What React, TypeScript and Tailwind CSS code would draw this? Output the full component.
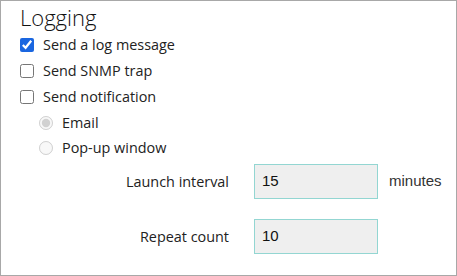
import React from "react";

export default function App() {
  const sans = { fontFamily: '"Open Sans", "Noto Sans", sans-serif' } as React.CSSProperties;
  return (
    <div
      className="w-[457px] h-[276px] border border-[#a8a8a8] bg-white text-[#222] box-border overflow-hidden"
      style={sans}
    >
      <div className="h-[30px] mt-[1px] pl-[19px] text-[22px] leading-[30px] font-light text-[#111]">
        Logging
      </div>
      <div className="flex flex-col pl-[19px]">
        {[
          ["Send a log message", true],
          ["Send SNMP trap", false],
          ["Send notification", false],
        ].map(([label, checked]) => (
          <label key={label as string} className="flex items-center h-[26px]">
            <input
              type="checkbox"
              defaultChecked={checked as boolean}
              className="m-0 w-[14px] h-[14px] accent-[#1a66e0]"
            />
            <span className="ml-[9px] text-[14.4px] text-[#222]">{label as string}</span>
          </label>
        ))}
      </div>
      <div className="flex flex-col pl-[38px]">
        <label className="flex items-center h-[25px]">
          <input type="radio" name="n" defaultChecked disabled className="m-0 w-[14px] h-[14px]" />
          <span className="ml-[9px] text-[14.4px] text-[#222]">Email</span>
        </label>
        <label className="flex items-center h-[25px]">
          <input type="radio" name="n" disabled className="m-0 w-[14px] h-[14px]" />
          <span className="ml-[9px] text-[14.4px] text-[#222]">Pop-up window</span>
        </label>
      </div>
      <div className="flex items-center h-[35px] mt-[4px]">
        <div className="w-[228px] text-right text-[14.4px] text-[#222]">Launch interval</div>
        <div
          className="ml-[25px] w-[124px] h-[35px] border border-[#93d6d2] bg-[#efefef] flex items-center pl-[7px] text-[15px] text-[#111]"
          style={{ fontFamily: '"Liberation Sans", Arial, sans-serif' }}
        >
          15
        </div>
        <div
          className="ml-[11px] text-[15px] text-[#333]"
          style={{ fontFamily: '"Liberation Sans", Arial, sans-serif' }}
        >
          minutes
        </div>
      </div>
      <div className="flex items-center h-[35px] mt-[20px]">
        <div className="w-[228px] text-right text-[14.4px] text-[#222]">Repeat count</div>
        <div
          className="ml-[25px] w-[124px] h-[35px] border border-[#93d6d2] bg-[#efefef] flex items-center pl-[7px] text-[15px] text-[#111]"
          style={{ fontFamily: '"Liberation Sans", Arial, sans-serif' }}
        >
          10
        </div>
      </div>
    </div>
  );
}
